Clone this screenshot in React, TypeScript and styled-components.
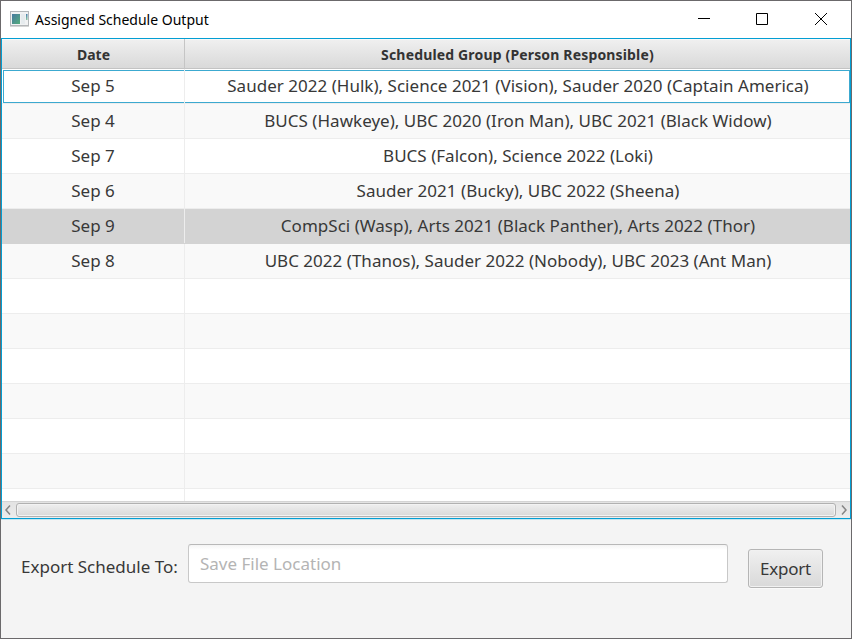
import React from 'react';
import styled, { createGlobalStyle } from 'styled-components';

const GlobalStyle = createGlobalStyle`
  * { box-sizing: border-box; }
  body { margin: 0; }
  button, input { font: inherit; }
`;

const Window = styled.div`
  width: 852px;
  height: 639px;
  display: flex;
  flex-direction: column;
  border: 1px solid #6b696b;
  background: #f4f4f4;
  color: #383838;
  font: 400 17px/34px 'Noto Sans', 'Open Sans', sans-serif;
  overflow: hidden;
`;

const TitleBar = styled.header`
  flex: none;
  height: 37px;
  display: flex;
  align-items: center;
  padding: 0 9px;
  background: #fff;
  color: #000;
  font-size: 14px;
`;

const AppIcon = styled.svg`
  flex: none;
  width: 19px;
  height: 16px;
  margin: 0 6px 1px 0;
`;

const Title = styled.h1`
  flex: 1;
  margin: 0;
  font: inherit;
`;

const Controls = styled.div`
  display: flex;
  gap: 45px;
  margin-right: 14px;
  padding-bottom: 3px;
`;

const ControlButton = styled.button`
  display: flex;
  padding: 0;
  border: 0;
  background: none;
`;

const ControlIcon = styled.svg`
  width: 14px;
  height: 14px;
  fill: none;
  stroke: #000;
`;

const Table = styled.section`
  flex: none;
  height: 481px;
  display: flex;
  flex-direction: column;
  border: 1px solid #039ed3;
  background: #fff;
  box-shadow: 0 1px 0 #c5e5ef;
`;

const HeaderRow = styled.div`
  flex: none;
  height: 30px;
  display: grid;
  grid-template-columns: 183px 1fr;
  border-bottom: 1px solid #c3c3c3;
  background: linear-gradient(#f0f0f0, #d9d9d9);
  box-shadow: inset 0 1px 0 #f8f8f8;
`;

const HeaderCell = styled.div<{ $spacing?: string }>`
  padding: 1px 0 0 1px;
  border-right: 1px solid #c5c5c5;
  text-align: center;
  color: #333;
  font-size: 14px;
  font-weight: 700;
  line-height: 29px;
  letter-spacing: ${(p) => p.$spacing ?? '0'};
  &:last-child { border-right: 0; padding-left: 0; }
`;

const Body = styled.div`
  flex: 1;
  min-height: 0;
  overflow: hidden;
`;

type RowTone = 'plain' | 'striped' | 'selected';
const tones: Record<RowTone, string> = {
  plain: '#fff',
  striped: '#f9f9f9',
  selected: '#d3d3d3',
};

const Row = styled.div<{ $tone: RowTone }>`
  height: 35px;
  display: grid;
  grid-template-columns: 183px 1fr;
  background: ${(p) => tones[p.$tone]};
  border-bottom: 1px solid ${(p) => (p.$tone === 'selected' ? tones.selected : '#ededed')};
`;

const Cell = styled.div<{ $focused?: boolean }>`
  border-right: 1px solid #ededed;
  text-align: center;
  white-space: nowrap;
  letter-spacing: 0.02px;
  padding-top: 1px;
  line-height: 32px;
  &:last-child { border-right: 0; padding-left: 1px; }
  ${(p) => p.$focused && `
    position: relative;
    &::before {
      content: '';
      position: absolute;
      inset: 1px 0 0 0;
      border: solid #3ca9d0;
      border-width: 1px 0;
    }
    &:first-child::before { border-left-width: 1px; left: 1px; }
    &:last-child::before { border-right-width: 1px; right: 0; }
  `}
`;

const ScrollBar = styled.div`
  flex: none;
  height: 17px;
  display: grid;
  grid-template-columns: 14px 1fr 14px;
  align-items: center;
  border-top: 1px solid #d4d4d4;
  background: linear-gradient(#e3e3e3, #ededed);
`;

const ScrollArrow = styled.svg`
  width: 14px;
  height: 16px;
  fill: none;
  stroke: #858585;
  stroke-width: 1.5;
`;

const Thumb = styled.div`
  height: 14px;
  border: 1px solid #b1b1b1;
  border-radius: 3px;
  background: linear-gradient(#efefef, #d9d9d9);
  box-shadow: inset 0 0 0 1px #f3f3f3;
`;

const ExportBar = styled.form`
  display: flex;
  align-items: flex-start;
  padding: 25px 28px 0 20px;
`;

const Label = styled.label`
  width: 167px;
  padding-top: 6px;
  white-space: nowrap;
`;

const PathInput = styled.input`
  width: 540px;
  height: 39px;
  padding: 0 11px;
  border: 1px solid #c8c8c8;
  border-top-color: #b8b8b8;
  border-radius: 3px;
  outline: 0;
  background: linear-gradient(#f4f4f4, #fff 5px);
  &::placeholder { color: #b4b4b4; opacity: 1; }
`;

const ExportButton = styled.button`
  width: 75px;
  height: 39px;
  margin: 5px 0 0 20px;
  padding: 1px 0 0;
  border: 1px solid #b5b5b5;
  border-radius: 3px;
  background: linear-gradient(#f0f0f0, #d9d9d9);
  box-shadow: inset 0 0 0 1px #f1f1f1, 0 1px 0 #fafafa;
  color: #383838;
  letter-spacing: -0.25px;
`;

const schedule: { date: string; groups: string }[] = [
  { date: 'Sep 5', groups: 'Sauder 2022 (Hulk), Science 2021 (Vision), Sauder 2020 (Captain America)' },
  { date: 'Sep 4', groups: 'BUCS (Hawkeye), UBC 2020 (Iron Man), UBC 2021 (Black Widow)' },
  { date: 'Sep 7', groups: 'BUCS (Falcon), Science 2022 (Loki)' },
  { date: 'Sep 6', groups: 'Sauder 2021 (Bucky), UBC 2022 (Sheena)' },
  { date: 'Sep 9', groups: 'CompSci (Wasp), Arts 2021 (Black Panther), Arts 2022 (Thor)' },
  { date: 'Sep 8', groups: 'UBC 2022 (Thanos), Sauder 2022 (Nobody), UBC 2023 (Ant Man)' },
];
const VISIBLE_ROWS = 13;
const FOCUSED_ROW = 0;
const SELECTED_ROW = 4;

function toneOf(index: number): RowTone {
  if (index === SELECTED_ROW) return 'selected';
  return index % 2 ? 'striped' : 'plain';
}

export default function App() {
  return (
    <>
      <GlobalStyle />
      <Window>
        <TitleBar>
          <AppIcon viewBox="0 0 19 16">
            <defs>
              <linearGradient id="pane" x1="0" y1="0" x2="1" y2="1">
                <stop offset="0" stopColor="#4779a0" />
                <stop offset="1" stopColor="#55ad7c" />
              </linearGradient>
              <linearGradient id="side" x1="0" y1="0" x2="0" y2="1">
                <stop offset="0" stopColor="#4a7fae" />
                <stop offset="1" stopColor="#8cc7a0" />
              </linearGradient>
            </defs>
            <rect x="0.5" y="0.5" width="18" height="14" fill="#f1f2f3" stroke="#b4b7ba" />
            <path d="M0 15.5h19" stroke="#d5d5d5" />
            <rect x="2" y="3" width="8" height="10" fill="url(#pane)" />
            <rect x="11" y="3" width="4" height="10" fill="#e6ebee" />
            <rect x="16" y="3" width="1.5" height="6" fill="url(#side)" />
          </AppIcon>
          <Title>Assigned Schedule Output</Title>
          <Controls>
            <ControlButton type="button" aria-label="Minimize">
              <ControlIcon viewBox="0 0 14 14"><path d="M2 7.5h12" /></ControlIcon>
            </ControlButton>
            <ControlButton type="button" aria-label="Maximize">
              <ControlIcon viewBox="0 0 14 14"><path d="M1.5 2.5h11v11h-11z" /></ControlIcon>
            </ControlButton>
            <ControlButton type="button" aria-label="Close">
              <ControlIcon viewBox="0 0 14 14"><path d="M1 2l12 12M13 2L1 14" /></ControlIcon>
            </ControlButton>
          </Controls>
        </TitleBar>

        <Table>
          <HeaderRow>
            <HeaderCell>Date</HeaderCell>
            <HeaderCell $spacing="0.16px">Scheduled Group (Person Responsible)</HeaderCell>
          </HeaderRow>
          <Body>
            {Array.from({ length: VISIBLE_ROWS }, (_, i) => (
              <Row key={i} $tone={toneOf(i)}>
                <Cell $focused={i === FOCUSED_ROW}>{schedule[i]?.date}</Cell>
                <Cell $focused={i === FOCUSED_ROW}>{schedule[i]?.groups}</Cell>
              </Row>
            ))}
          </Body>
          <ScrollBar>
            <ScrollArrow viewBox="0 0 14 16"><path d="M8 3.5L4 8l4 4.5" /></ScrollArrow>
            <Thumb />
            <ScrollArrow viewBox="0 0 14 16"><path d="M6 3.5L10 8l-4 4.5" /></ScrollArrow>
          </ScrollBar>
        </Table>

        <ExportBar>
          <Label htmlFor="path">Export Schedule To:</Label>
          <PathInput id="path" placeholder="Save File Location" />
          <ExportButton type="button">Export</ExportButton>
        </ExportBar>
      </Window>
    </>
  );
}
